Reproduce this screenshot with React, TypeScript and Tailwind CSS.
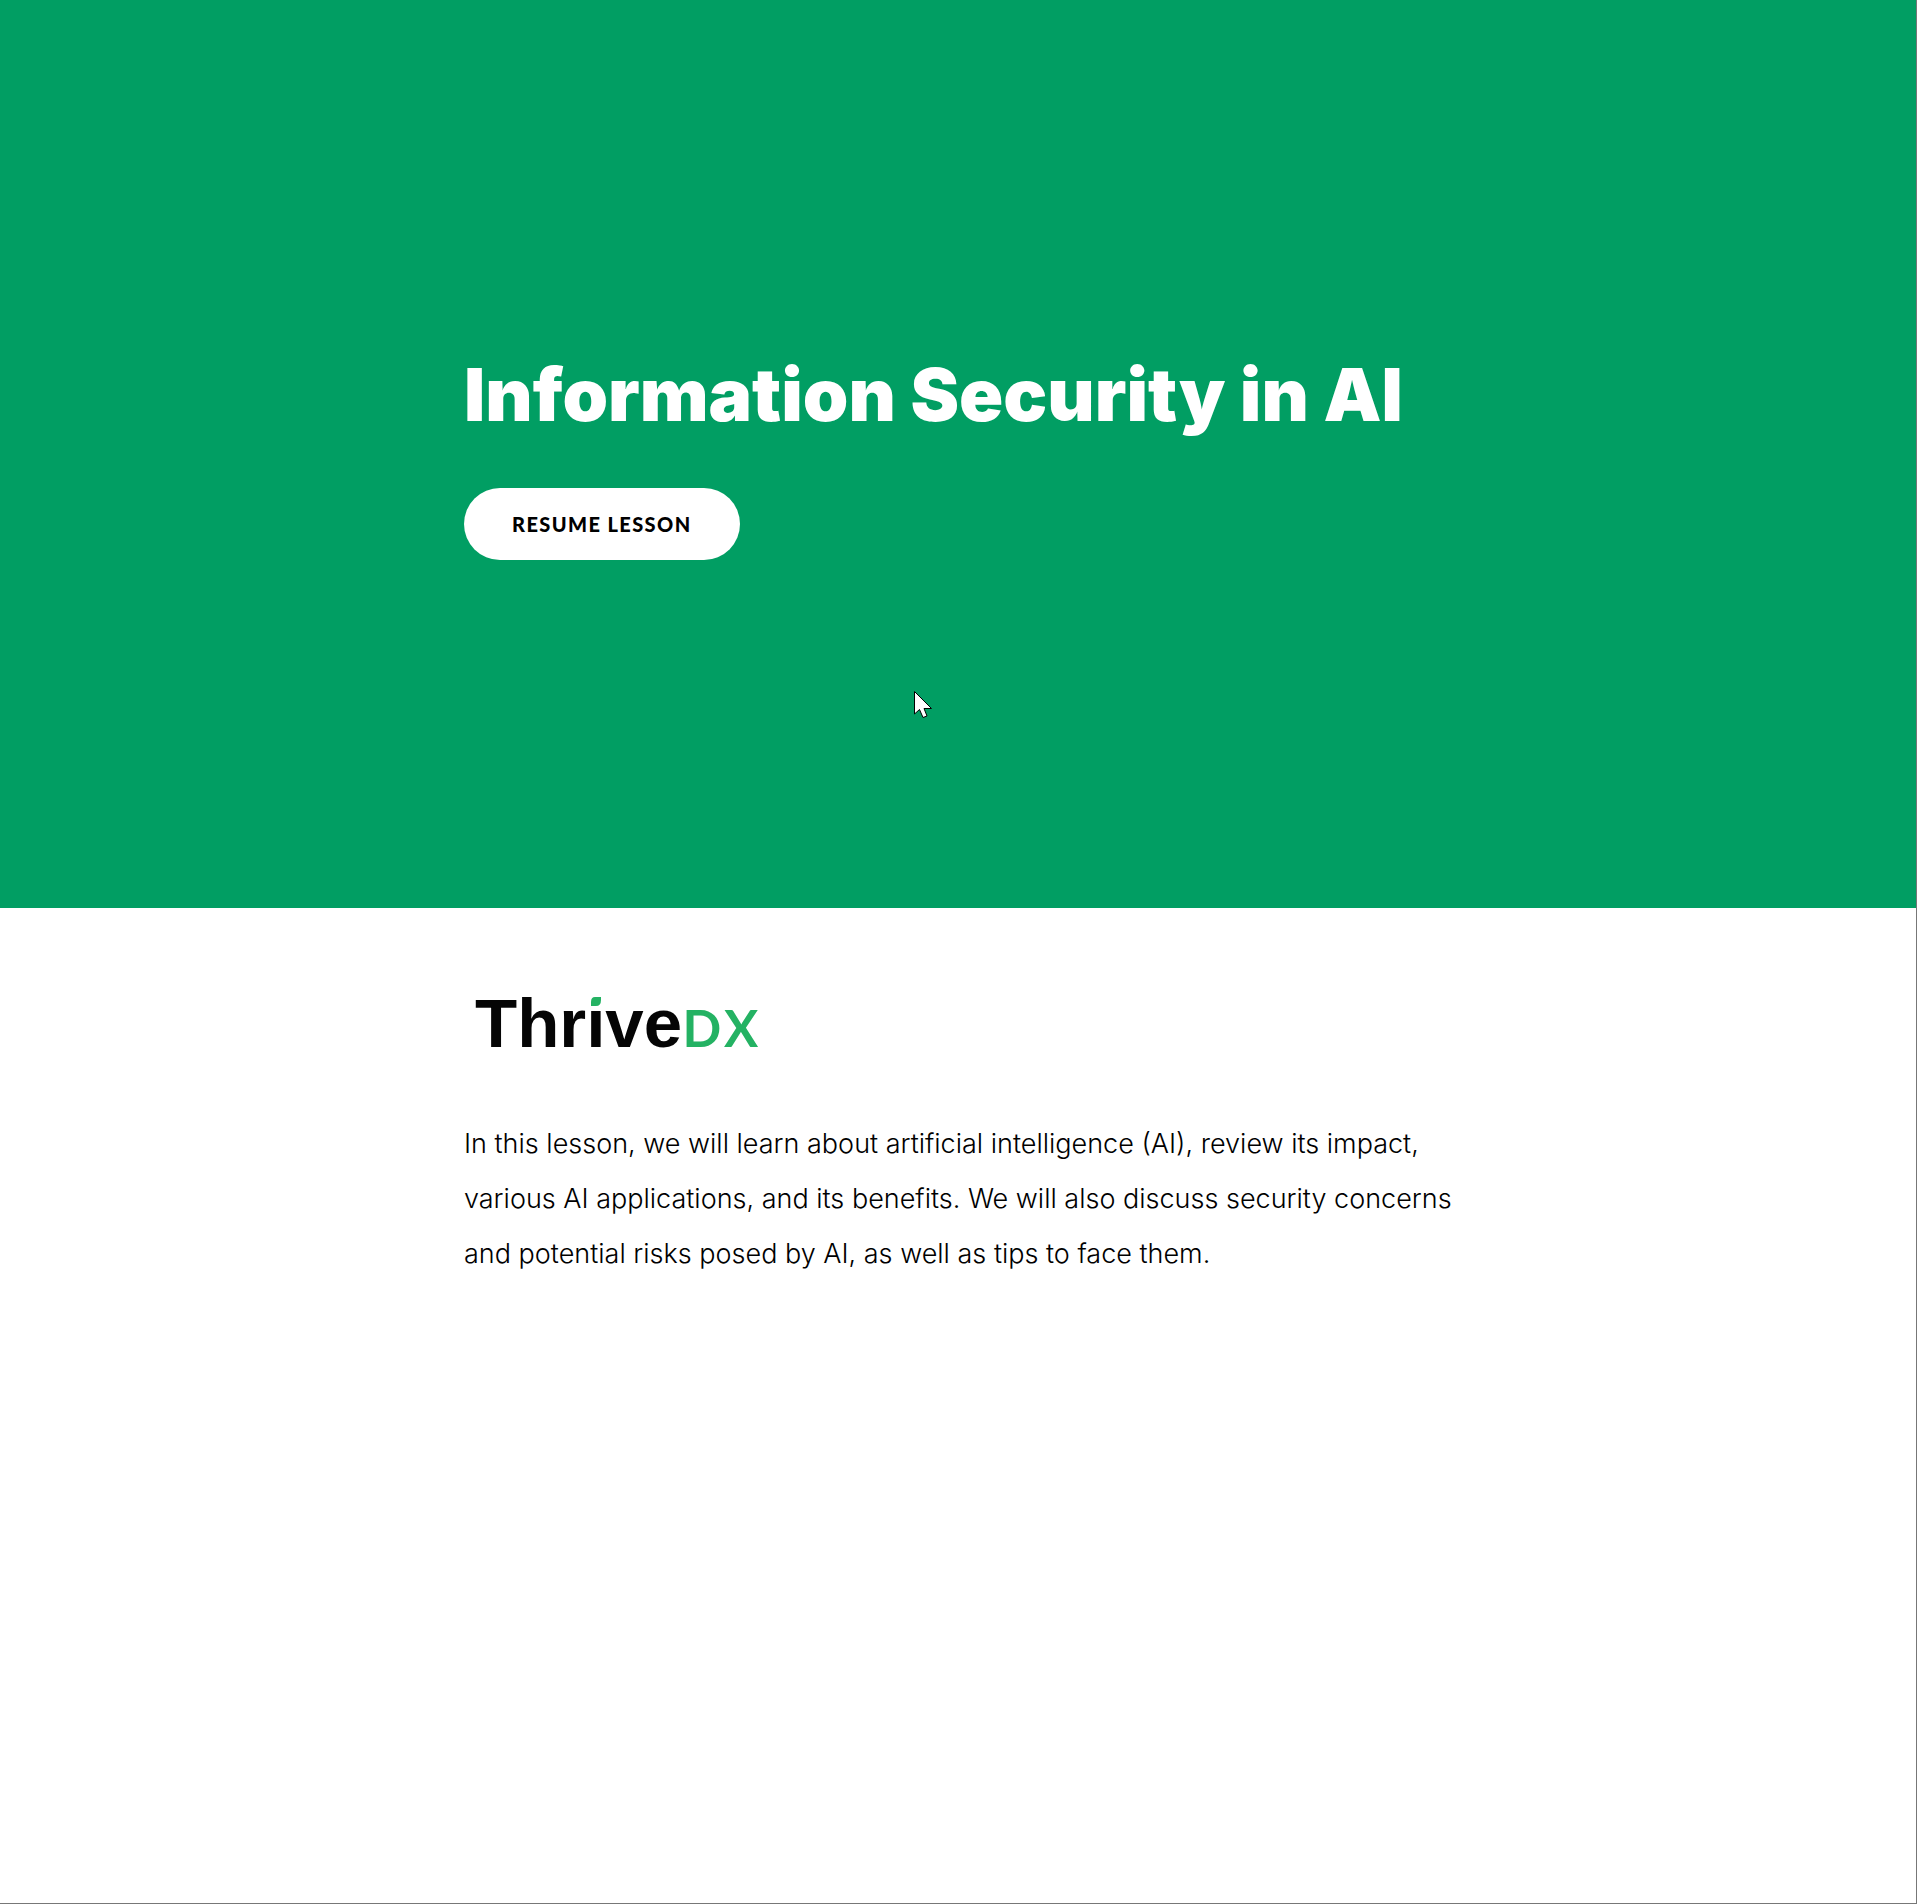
function ThriveLogo() {
  return (
    <svg className="block h-[84px] w-80" viewBox="0 0 320 84" role="img" aria-label="ThriveDX">
      <text x="11" y="67" fontSize="69" fontWeight="700" fill="#050505" fontFamily="Liberation Sans, sans-serif">
        Thrıve
      </text>
      <path d="M131 17H137V20Q137 26 132 26H127V22Q127 17 131 17Z" fill="#24b263" />
      <text x="238" y="67" fontSize="51" fontWeight="700" fill="#24b263" textAnchor="middle" fontFamily="Lato, sans-serif">
        D
      </text>
      <text x="277" y="67" fontSize="51" fontWeight="700" fill="#24b263" textAnchor="middle" fontFamily="Lato, sans-serif">
        X
      </text>
    </svg>
  );
}

function Pointer() {
  return (
    <svg className="absolute left-[914px] top-[691px] h-7 w-5" viewBox="0 0 20 28" aria-hidden="true">
      <path
        d="M.5 .5V23L5.5 18.5L9 26.5L13 25L10 17.5H17.5Z"
        fill="#fff"
        stroke="#000"
        strokeWidth="1"
      />
    </svg>
  );
}

export default function App() {
  return (
    <div className="relative min-h-screen border-b border-r border-[#777777] bg-white font-[Inter,sans-serif] text-black">
      <header className="flex min-h-[908px] flex-col justify-center bg-[#019e63]">
        <div className="mx-auto w-full max-w-[988px]">
          <h1 className="text-[73px] leading-[94px] font-black text-white">Information Security in AI</h1>
          <button
            type="button"
            className="mt-[46px] h-[72px] rounded-full bg-white px-12 font-[Lato,sans-serif] text-xl font-black tracking-[0.07em]"
          >
            RESUME LESSON
          </button>
        </div>
      </header>
      <main className="mx-auto w-full max-w-[988px] pt-[72px]">
        <ThriveLogo />
        <p className="-mr-4 mt-[52px] text-[27px] leading-[55px] font-light">
          In this lesson, we will learn about artificial intelligence (AI), review its impact, various AI
          applications, and its benefits. We will also discuss security concerns and potential risks posed by AI, as
          well as tips to face them.
        </p>
      </main>
      <Pointer />
    </div>
  );
}
